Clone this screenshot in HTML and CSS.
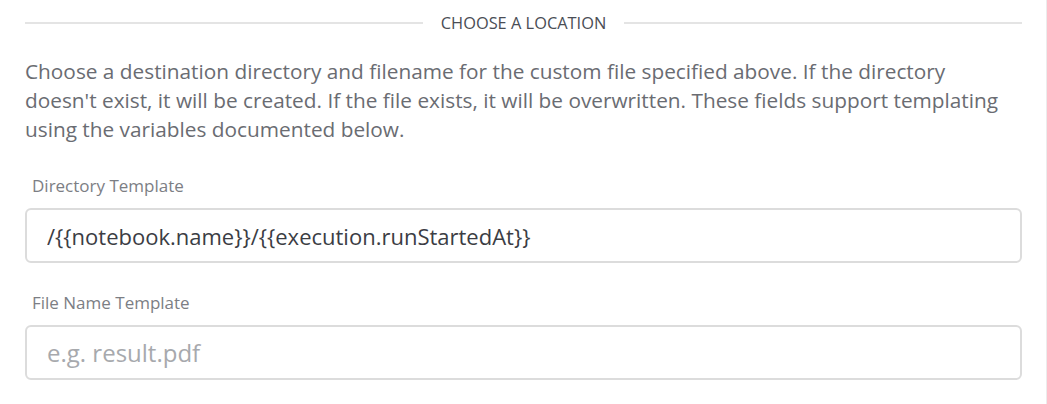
FILE: index.html
```html
<!DOCTYPE html>
<html lang="en">
<head>
  <meta charset="UTF-8">
  <title>Choose a Location</title>
  <link rel="stylesheet" href="styles.css">
</head>
<body>
  <div class="panel">
    <div class="divider"><span>Choose a location</span></div>

    <p class="intro">Choose a destination directory and filename for the custom file specified above. If the directory doesn't exist, it will be created. If the file exists, it will be overwritten. These fields support templating using the variables documented below.</p>

    <label class="field-label" for="dirTemplate">Directory Template</label>
    <input type="text" id="dirTemplate" class="field" value="/{{notebook.name}}/{{execution.runStartedAt}}">

    <label class="field-label" for="fileTemplate">File Name Template</label>
    <input type="text" id="fileTemplate" class="field" placeholder="e.g. result.pdf">
  </div>
</body>
</html>
```

FILE: styles.css
```css
html, body {
  margin: 0;
  background: #fff;
}
body {
  font-family: "Open Sans", Arial, sans-serif;
}
.panel {
  height: 404px;
  box-sizing: border-box;
  padding: 12px 24px 0 25px;
  border-right: 1px solid #ececec;
}
.divider {
  display: flex;
  align-items: center;
  gap: 18px;
  color: #4a4d55;
  font-size: 16.4px;
  text-transform: uppercase;
  line-height: 22px;
}
.divider::before,
.divider::after {
  content: "";
  flex: 1;
  height: 2px;
  background: #e4e4e4;
}
.intro {
  margin: 23px 0 31px;
  color: #6a6c72;
  font-size: 20.8px;
  line-height: 29px;
}
.field-label {
  display: block;
  padding-left: 7px;
  color: #7c7e84;
  font-size: 17px;
  line-height: 22px;
  margin-bottom: 11px;
}
.field {
  display: block;
  width: 100%;
  box-sizing: border-box;
  height: 55px;
  margin: 0 0 29px;
  padding: 0 20px;
  border: 2px solid #dcdcdc;
  border-radius: 6px;
  font-family: inherit;
  font-size: 22px;
  color: #3b3d44;
  outline: none;
}
.field::placeholder {
  color: #a7a9ad;
  font-size: 24px;
}
```
